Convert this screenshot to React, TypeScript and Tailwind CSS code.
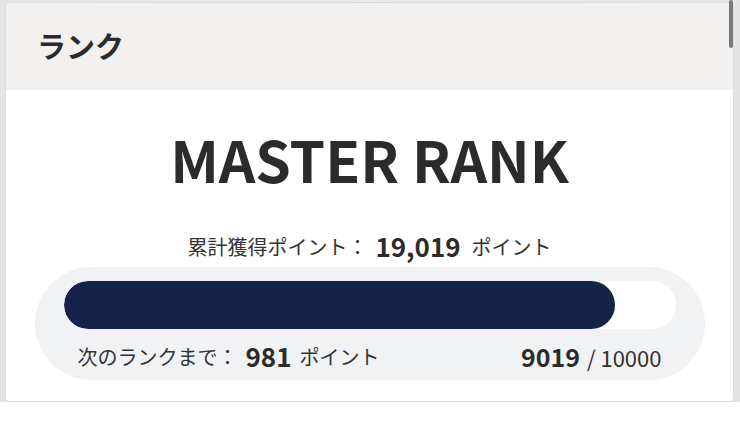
import React from "react";

export default function App() {
  const current = 9019;
  const max = 10000;
  const pct = (current / max) * 100;
  return (
    <div
      className="w-[740px] h-[424px] bg-white relative overflow-hidden"
      style={{ fontFamily: '"Noto Sans CJK JP", "Noto Sans", sans-serif' }}
    >
      <div className="flex h-[402px] bg-gradient-to-r from-[#e4e4e4] via-[#ececec] to-[#e4e4e4] pl-[5px] pr-[6px] pt-[2px]">
        <div className="flex-1 flex flex-col bg-white border border-[#dcdcdc] rounded-[4px] overflow-hidden">
          <div className="h-[87px] shrink-0 bg-[#f2f1f0] flex items-center pl-[31px]">
            <h2 className="text-[29px] font-bold text-[#2b2b2b] leading-none pb-[2px]">ランク</h2>
          </div>
          <div className="flex flex-col items-center">
            <div className="mt-[40px] h-[56px] flex items-center text-[57px] font-bold text-[#2b2b2b] leading-none">
              MASTER RANK
            </div>
            <div className="mt-[46px] h-[30px] flex items-center text-[20px] text-[#333] leading-none">
              <span>累計獲得ポイント：</span>
              <span className="ml-[8px] text-[26px] font-bold text-[#2b2b2b] pb-[3px]">19,019</span>
              <span className="ml-[11px]">ポイント</span>
            </div>
            <div className="mt-[5px] w-[670px] h-[113px] rounded-full bg-[#f1f2f4] px-[29px] pt-[14px] flex flex-col">
              <div className="h-[48px] w-full rounded-full bg-white overflow-hidden">
                <div className="h-full rounded-full bg-[#15234a]" style={{ width: `${pct}%` }} />
              </div>
              <div className="mt-[14px] h-[28px] flex items-center justify-between px-[14px] text-[20px] text-[#333] leading-none">
                <div className="flex items-center">
                  <span>次のランクまで：</span>
                  <span className="ml-[8px] text-[26px] font-bold text-[#2b2b2b] pb-[3px]">981</span>
                  <span className="ml-[8px]">ポイント</span>
                </div>
                <div className="flex items-center">
                  <span className="text-[25px] font-bold text-[#2b2b2b] pb-[2px]">9019</span>
                  <span className="ml-[7px] text-[22px] pb-[1px]">/ 10000</span>
                </div>
              </div>
            </div>
          </div>
        </div>
      </div>
      <div className="absolute right-[7px] top-0 w-[4px] h-[48px] rounded-full bg-[#7a7a7a]" />
    </div>
  );
}
